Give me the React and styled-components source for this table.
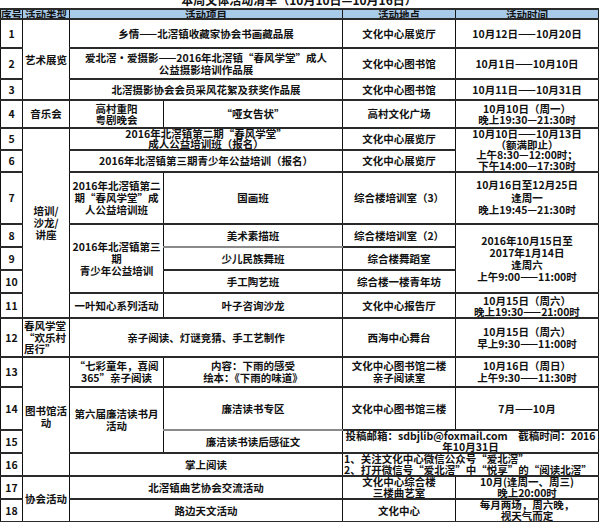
import React from 'react';
import styled, { createGlobalStyle } from 'styled-components';

const Global = createGlobalStyle`
  html, body { margin: 0; padding: 0; background: #fff; }
`;

const Page = styled.div`
  width: 600px;
  height: 522px;
  overflow: hidden;
  font-family: "Noto Sans CJK SC", sans-serif;
  font-weight: 700;
  color: #111;
`;

const Caption = styled.div`
  width: 598px;
  height: 8px;
  overflow: hidden;
  text-align: center;
  font-size: 12px;
  line-height: 12px;
  span { display: block; margin-top: -6px; }
`;

const Table = styled.table`
  width: 598px;
  border-collapse: collapse;
  table-layout: fixed;
  font-size: 10.5px;
`;

const Row = styled.tr`
  height: ${p => p.$h}px;
`;

const HeadCell = styled.th`
  background: #a9cbea;
  border-top: 2px solid #2b2b2b;
  border-bottom: 1px solid #2b2b2b;
  border-left: 1px solid #1a1a1a;
  border-right: 1px solid #1a1a1a;
  padding: 0;
  font-weight: 700;
`;

const HeadLabel = styled.div`
  height: 8px;
  line-height: 10px;
  overflow: hidden;
  text-align: center;
`;

const Cell = styled.td`
  border-left: 1px solid #111;
  border-right: 1px solid #111;
  border-top: 2px solid ${p => (p.$soft ? '#8a8a8a' : '#2a2a2a')};
  border-bottom: 2px solid ${p => (p.$softBottom ? '#8a8a8a' : '#2a2a2a')};
  padding: 0 1px;
  text-align: ${p => p.$align || 'center'};
  vertical-align: middle;
  line-height: ${p => p.$lh || 12}px;
  white-space: pre-line;
  overflow: hidden;
`;

const Num = styled(Cell)`
  text-align: center;
  padding: 0;
`;

export default function App() {
  return (
    <Page>
      <Global />
      <Caption>
        <span>本周文体活动清单（10月10日—10月16日）</span>
      </Caption>
      <Table>
        <colgroup>
          <col style={{ width: 22 }} />
          <col style={{ width: 47 }} />
          <col style={{ width: 94 }} />
          <col style={{ width: 179 }} />
          <col style={{ width: 113 }} />
          <col style={{ width: 143 }} />
        </colgroup>
        <thead>
          <tr>
            <HeadCell><HeadLabel>序号</HeadLabel></HeadCell>
            <HeadCell><HeadLabel>活动类型</HeadLabel></HeadCell>
            <HeadCell colSpan={2}><HeadLabel>活动项目</HeadLabel></HeadCell>
            <HeadCell><HeadLabel>活动地点</HeadLabel></HeadCell>
            <HeadCell><HeadLabel>活动时间</HeadLabel></HeadCell>
          </tr>
        </thead>
        <tbody>
          <Row $h={29}>
            <Num>1</Num>
            <Cell rowSpan={3}>艺术展览</Cell>
            <Cell colSpan={2}>乡情——北滘镇收藏家协会书画藏品展</Cell>
            <Cell>文化中心展览厅</Cell>
            <Cell>10月12日——10月20日</Cell>
          </Row>
          <Row $h={31}>
            <Num>2</Num>
            <Cell colSpan={2}>{'爱北滘·爱摄影——2016年北滘镇“春风学堂”成人\n公益摄影培训作品展'}</Cell>
            <Cell>文化中心图书馆</Cell>
            <Cell>10月1日——10月10日</Cell>
          </Row>
          <Row $h={21}>
            <Num>3</Num>
            <Cell colSpan={2}>北滘摄影协会会员采风花絮及获奖作品展</Cell>
            <Cell>文化中心图书馆</Cell>
            <Cell>10月11日——10月31日</Cell>
          </Row>
          <Row $h={28}>
            <Num>4</Num>
            <Cell>音乐会</Cell>
            <Cell $lh={11}>{'高村重阳\n粤剧晚会'}</Cell>
            <Cell>“哑女告状”</Cell>
            <Cell>高村文化广场</Cell>
            <Cell $lh={11}>{'10月10日（周一）\n晚上19:30—21:30时'}</Cell>
          </Row>
          <Row $h={21}>
            <Num>5</Num>
            <Cell rowSpan={7} $lh={12}>{'培训/\n沙龙/\n讲座'}</Cell>
            <Cell colSpan={2} $lh={10}>{'2016年北滘镇第二期“春风学堂”\n成人公益培训班（报名）'}</Cell>
            <Cell>文化中心展览厅</Cell>
            <Cell rowSpan={2} $lh={10.5}>{'10月10日——10月13日\n（额满即止）\n上午8:30—12:00时；\n下午14:00—17:30时'}</Cell>
          </Row>
          <Row $h={22}>
            <Num>6</Num>
            <Cell colSpan={2}>2016年北滘镇第三期青少年公益培训（报名）</Cell>
            <Cell>文化中心展览厅</Cell>
          </Row>
          <Row $h={52}>
            <Num>7</Num>
            <Cell $lh={12}>{'2016年北滘镇第二\n期“春风学堂”成\n人公益培训班'}</Cell>
            <Cell>国画班</Cell>
            <Cell>综合楼培训室（3）</Cell>
            <Cell $lh={12.5}>{'10月16日至12月25日\n逢周一\n晚上19:45—21:30时'}</Cell>
          </Row>
          <Row $h={23}>
            <Num>8</Num>
            <Cell rowSpan={3} $lh={12}>{'2016年北滘镇第三\n期\n青少年公益培训'}</Cell>
            <Cell $softBottom>美术素描班</Cell>
            <Cell>综合楼培训室（2）</Cell>
            <Cell rowSpan={3} $lh={12}>{'2016年10月15日至\n2017年1月14日\n逢周六\n上午9:00——11:00时'}</Cell>
          </Row>
          <Row $h={23}>
            <Num>9</Num>
            <Cell $soft>少儿民族舞班</Cell>
            <Cell>综合楼舞蹈室</Cell>
          </Row>
          <Row $h={23}>
            <Num>10</Num>
            <Cell>手工陶艺班</Cell>
            <Cell>综合楼一楼青年坊</Cell>
          </Row>
          <Row $h={25}>
            <Num>11</Num>
            <Cell>一叶知心系列活动</Cell>
            <Cell>叶子咨询沙龙</Cell>
            <Cell>文化中心报告厅</Cell>
            <Cell $lh={11}>{'10月15日（周六）\n晚上19:30——21:00时'}</Cell>
          </Row>
          <Row $h={39}>
            <Num>12</Num>
            <Cell $align="left" $lh={11.5}>{'春风学堂\n“欢乐村\n居行”'}</Cell>
            <Cell colSpan={2}>亲子阅读、灯谜竞猜、手工艺制作</Cell>
            <Cell>西海中心舞台</Cell>
            <Cell $lh={12}>{'10月15日（周六）\n早上9:30——11:00时'}</Cell>
          </Row>
          <Row $h={30}>
            <Num>13</Num>
            <Cell rowSpan={4} $lh={12}>{'图书馆活\n动'}</Cell>
            <Cell $lh={12}>{'“七彩童年，喜阅\n365”亲子阅读'}</Cell>
            <Cell $lh={12}>{'内容：下雨的感受\n绘本：《下雨的味道》'}</Cell>
            <Cell $lh={12}>{'文化中心图书馆二楼\n亲子阅读室'}</Cell>
            <Cell $lh={12}>{'10月16日（周日）\n上午9:30——11:30时'}</Cell>
          </Row>
          <Row $h={43}>
            <Num>14</Num>
            <Cell rowSpan={2} $lh={12}>{'第六届廉洁读书月\n活动'}</Cell>
            <Cell $softBottom>廉洁读书专区</Cell>
            <Cell>文化中心图书馆三楼</Cell>
            <Cell>7月——10月</Cell>
          </Row>
          <Row $h={22}>
            <Num>15</Num>
            <Cell $soft>廉洁读书读后感征文</Cell>
            <Cell colSpan={2} $lh={10.5}>{'投稿邮箱：sdbjlib@foxmail.com　截稿时间：2016\n年10月31日'}</Cell>
          </Row>
          <Row $h={23}>
            <Num>16</Num>
            <Cell colSpan={2}>掌上阅读</Cell>
            <Cell colSpan={2} $align="left" $lh={10.5}>{'1、关注文化中心微信公众号“爱北滘”\n2、打开微信号“爱北滘”中“悦享”的“阅读北滘”'}</Cell>
          </Row>
          <Row $h={23}>
            <Num>17</Num>
            <Cell rowSpan={2}>协会活动</Cell>
            <Cell colSpan={2}>北滘镇曲艺协会交流活动</Cell>
            <Cell $lh={10.5}>{'文化中心综合楼\n三楼曲艺室'}</Cell>
            <Cell $lh={10.5}>{'10月(逢周一、周三)\n晚上20:00时'}</Cell>
          </Row>
          <Row $h={22}>
            <Num>18</Num>
            <Cell colSpan={2}>路边天文活动</Cell>
            <Cell>文化中心</Cell>
            <Cell $lh={10.5}>{'每月两场，周六晚，\n视天气而定'}</Cell>
          </Row>
          <Row $h={6}>
            <Num />
            <Cell />
            <Cell colSpan={2} />
            <Cell />
            <Cell />
          </Row>
        </tbody>
      </Table>
    </Page>
  );
}
